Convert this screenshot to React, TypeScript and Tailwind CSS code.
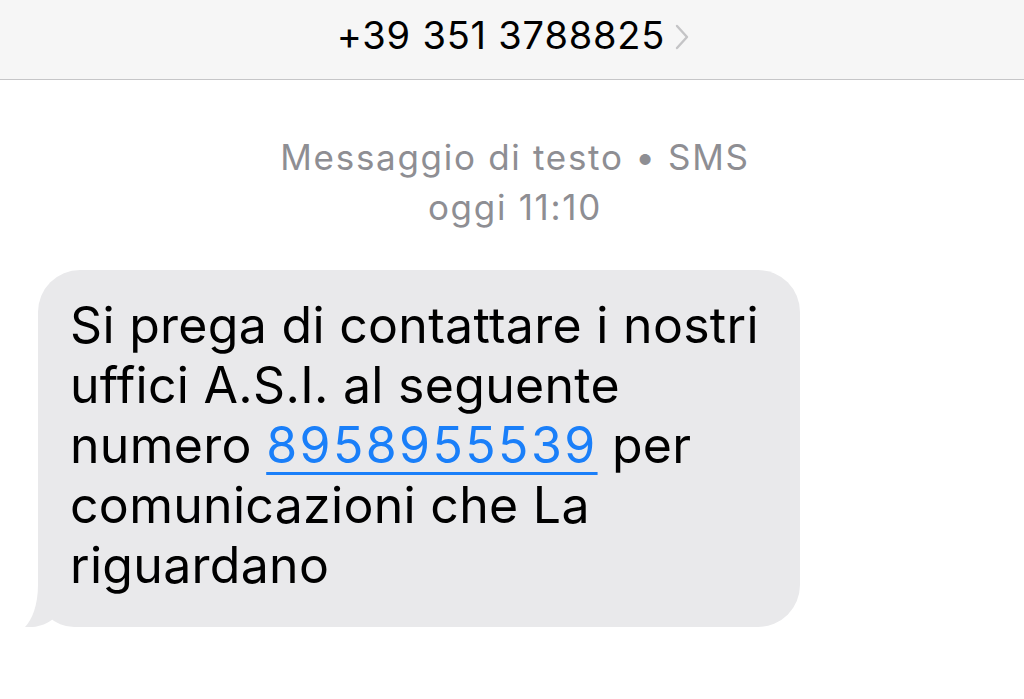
export default function App() {
  return (
    <div
      className="w-[1024px] h-[699px] bg-white overflow-hidden flex flex-col"
      style={{ fontFamily: "Inter, 'Liberation Sans', sans-serif" }}
    >
      {/* top bar */}
      <div className="h-[80px] bg-[#f6f6f6] border-b border-[#c6c6c8] flex items-center justify-center shrink-0">
        <div className="flex items-center gap-[10px] ml-[2px] -mt-[8px]">
          <span className="text-[38px] text-black tracking-[0.8px]">+39 351 3788825</span>
          <svg width="14" height="26" viewBox="0 0 14 26" className="mt-[2px]">
            <path d="M2 2 L12 13 L2 24" fill="none" stroke="#c4c4c6" strokeWidth="2.4" strokeLinecap="round" strokeLinejoin="round" />
          </svg>
        </div>
      </div>

      {/* conversation */}
      <div className="flex flex-col pt-[52px]">
        <div className="flex flex-col items-center text-[#8e8e93] text-[35px] tracking-[1.7px] leading-[50px] ml-[6px]">
          <span>Messaggio di testo • SMS</span>
          <span>oggi 11:10</span>
        </div>

        <div className="relative ml-[38px] mt-[38px] w-[762px] bg-[#e9e9eb] rounded-[42px] rounded-bl-[36px] pl-[32px] pt-[25px] pb-[32px] text-[50px] tracking-[0.3px] leading-[60px] text-black">
          Si prega di contattare i nostri
          <br />
          uffici A.S.I. al seguente
          <br />
          numero{" "}
          <span className="text-[#1a7ff9] tracking-[2.4px] underline decoration-[2.5px] underline-offset-[9px]">8958955539</span> per
          <br />
          comunicazioni che La
          <br />
          riguardano
          <svg width="40" height="50" viewBox="0 0 40 50" className="absolute left-[-14px] bottom-0">
            <path d="M14 3 L14 8 C14 28 8 43 1 50 C11 51 22 48 29 42 L36 23 L36 3 Z" fill="#e9e9eb" />
          </svg>
        </div>
      </div>
    </div>
  );
}
